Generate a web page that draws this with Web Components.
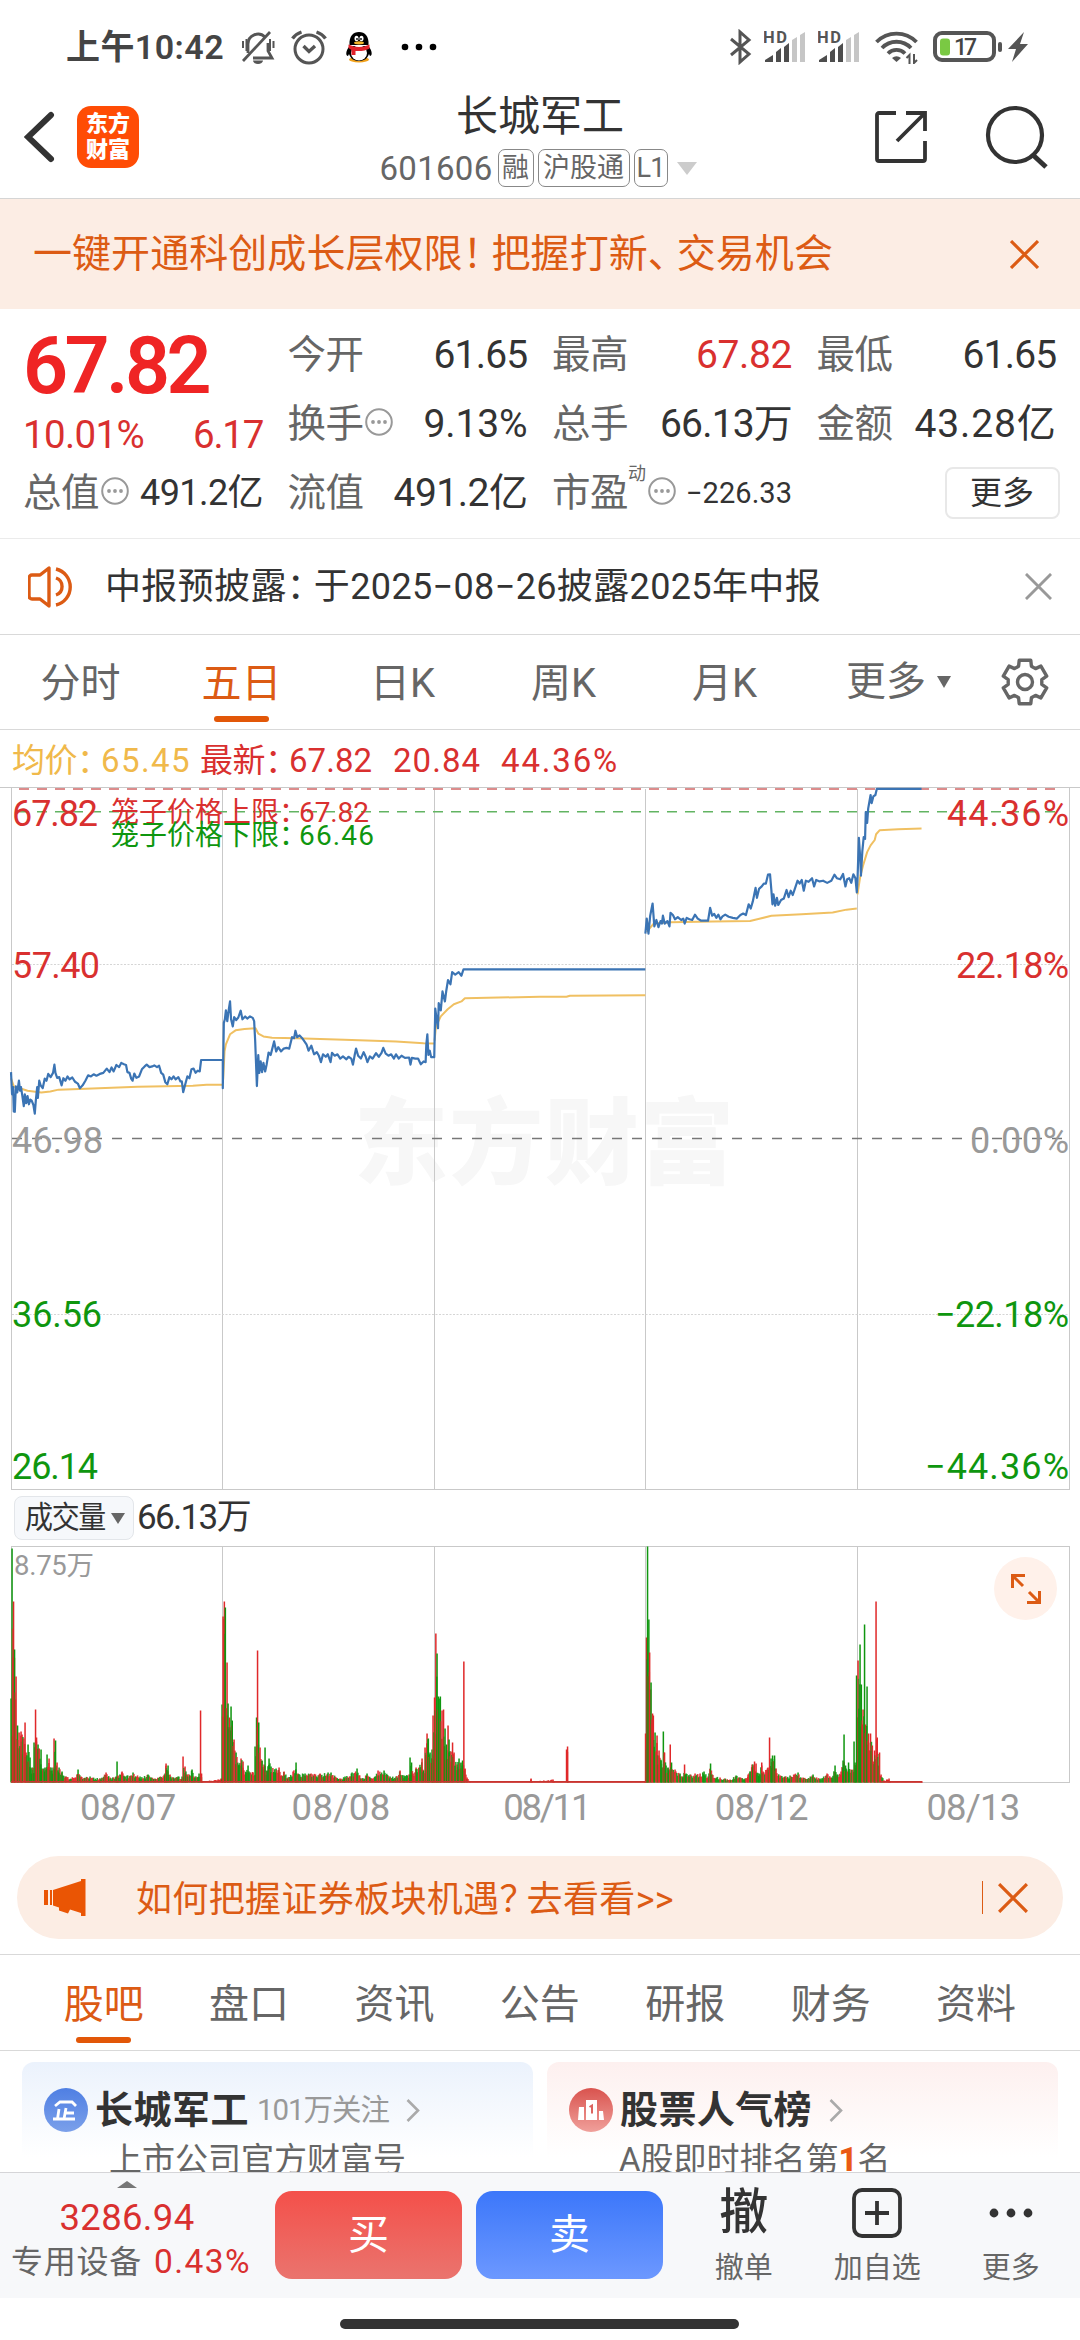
<!DOCTYPE html>
<html lang="zh-CN">
<head>
<meta charset="utf-8">
<title>长城军工 601606</title>
<style>
	body {
		margin: 0;
		width: 1080px;
		height: 2340px;
		overflow: hidden;
		background: #fff;
		color: #333;
		font-family: Roboto, "Noto Sans CJK SC", sans-serif;
	}
</style>
</head>
<body>
<stock-page></stock-page>
<script>
const sheet = `
	* { box-sizing: border-box; }
	svg { display: block; flex: none; }
`;

// Small base: every element only gives back its markup.
class Part extends HTMLElement {
	connectedCallback() {
		if (this.shadowRoot) return;
		this.attachShadow({ mode: "open" });
		this.shadowRoot.innerHTML = `<style>${sheet}</style>` + this.render();
	}
	get(name, fallback = "") {
		return this.getAttribute(name) ?? fallback;
	}
}

const cross = (size, color, width = 3) => `
	<svg width="${size}" height="${size}" viewBox="0 0 28 28" fill="none" stroke="${color}" stroke-width="${width}">
		<path d="M1 1 27 27M27 1 1 27"/>
	</svg>`;

// One run of text, tracked so that it fills the width in "w".
class FitText extends Part {
	render() {
		const text = this.get("text").replace(/[：！、？]/g, (c) => `<i>${c}</i>`);
		return `
			<style>
				:host { display: block; flex: none; white-space: nowrap; }
				span { letter-spacing: var(--ls, 0px); }
				i { font-style: normal; letter-spacing: calc(var(--ls, 0px) - 0.26em); }
			</style>
			<span>${text}</span>`;
	}
	connectedCallback() {
		super.connectedCallback();
		const w = Number(this.get("w", 0));
		if (!w) return;
		const span = this.shadowRoot.querySelector("span");
		const gap = (w - span.getBoundingClientRect().width) / this.get("text").length;
		span.style.setProperty("--ls", gap.toFixed(3) + "px");
	}
}

class StatusBar extends Part {
	render() {
		const signal = `
			<svg width="42" height="34" viewBox="0 0 42 34">
				<text x="-1" y="12.500" font-size="16.500" font-weight="700" fill="#555" textLength="24" font-family="Roboto, sans-serif">HD</text>
				<path fill="#4d4d4d" d="M1 32v-2l8-5v7zM12 32V22l5-4v14zM20 32V17l5-4v19z"/>
				<path fill="#c6c6c6" d="M28 32V10l5-3v25zM36 32V5l5-3v30z"/>
			</svg>`;
		return `
			<style>
				:host { display: flex; align-items: center; height: 92px; padding: 2px 52px 0 66px; }
				.time { font-size: 34px; font-weight: 600; color: #444; line-height: 40px; }
				.left, .right { display: flex; align-items: center; }
				.right { margin-left: auto; }
			</style>
			<div class="left">
				<fit-text class="time" text="上午10:42" w="158"></fit-text>
				<svg style="margin-left:16px" width="36" height="34" viewBox="0 0 36 34" fill="none" stroke="#555" stroke-width="2.800">
					<path d="M8 21v-7a10 10 0 0 1 17-7M28 13v8l4 7H13M8 21v2"/>
					<path d="M3 31 30 2"/>
					<path d="M6.500 9v12M3 11v7M30 9v12M33.500 11v7" stroke-width="2"/>
					<path d="M13 30.500h10a5 3.400 0 0 1-10 0z" fill="#555" stroke="none"/>
				</svg>
				<svg style="margin-left:15px" width="36" height="36" viewBox="0 0 36 36" fill="none" stroke="#555" stroke-width="3">
					<circle cx="18" cy="20" r="14"/>
					<path d="m12.500 17 5.500 5.500 6-5.500M1.500 9.500a18 18 0 0 1 9-6.500M34.500 9.500a18 18 0 0 0-9-6.500" stroke-width="3.400"/>
				</svg>
				<svg style="margin-left:18px" width="28" height="32" viewBox="0 0 28 32">
					<ellipse cx="14" cy="28.500" rx="10" ry="3" fill="#f2a21c"/>
					<path d="M4.500 15C0 21 1 25 3 25l1-2c2 5 5 7 10 7s8-2 10-7l1 2c2 0 3-4-1.500-10z" fill="#000"/>
					<ellipse cx="14" cy="22" rx="8" ry="7.500" fill="#fff"/>
					<path d="M4.500 14C4 5 8 1 14 1s10 4 9.500 13z" fill="#000"/>
					<ellipse cx="11.500" cy="7.500" rx="2" ry="2.800" fill="#fff"/><ellipse cx="16.500" cy="7.500" rx="2" ry="2.800" fill="#fff"/>
					<circle cx="12" cy="8" r=".9"/><circle cx="16" cy="8" r=".9"/>
					<ellipse cx="14" cy="11.800" rx="5" ry="1.600" fill="#f5b52a"/>
					<path d="M3.500 13.500q10.500 5 21 0v4q-5 3-14 2.500v4h-4V19l-3-2z" fill="#e0222a"/>
				</svg>
				<svg style="margin-left:28px" width="36" height="8" viewBox="0 0 36 8"><circle cx="4" cy="4" r="3.300"/><circle cx="18" cy="4" r="3.300"/><circle cx="32" cy="4" r="3.300"/></svg>
			</div>
			<div class="right">
				<svg width="22" height="36" viewBox="0 0 22 36" fill="none" stroke="#555" stroke-width="3"><path d="m1 10 18 15-9 8V3l9 8L1 26"/></svg>
				<div style="width:12px"></div>${signal}
				<div style="width:12px"></div>${signal}
				<svg style="margin-left:15px" width="44" height="34" viewBox="0 0 44 34" fill="none" stroke="#555" stroke-width="3.800">
					<path d="M1.500 12a28 28 0 0 1 40 0M7 18a20 20 0 0 1 29 0M13 23.500a12 12 0 0 1 17 0"/>
					<path d="m17 28 4.500 4 4.500-4a7 7 0 0 0-9 0z" fill="#555" stroke="none"/>
					<path d="M34.500 34V25l-3 3M39 24v9l3-3" stroke-width="2"/>
				</svg>
				<svg style="margin-left:14px" width="70" height="32" viewBox="0 0 70 32">
					<rect x="2" y="2" width="59" height="27" rx="7" fill="none" stroke="#555" stroke-width="4"/>
					<rect x="7" y="7.500" width="10" height="17" rx="3" fill="#7ac943"/>
					<text x="21" y="24" font-size="23" font-weight="500" fill="#444" textLength="23" font-family="Roboto, sans-serif">17</text>
					<rect x="65" y="11" width="4" height="10" rx="2" fill="#555"/>
				</svg>
				<svg style="margin-left:5px" width="20" height="30" viewBox="0 0 20 30"><path d="M16 0 0 17h8L4 30 20 12h-8z" fill="#555"/></svg>
			</div>`;
	}
}

class StockHeader extends Part {
	render() {
		return `
			<style>
				:host { display: grid; grid-template-columns: 340px 400px 340px; height: 107px; border-bottom: 1px solid #d5d5d5; }
				.side { display: flex; align-items: center; height: 90px; }
				.left { padding-left: 24px; }
				.right { justify-content: flex-end; padding-right: 31px; gap: 57px; }
				.logo {
					display: grid; place-content: center; justify-items: center;
					width: 62px; height: 62px; margin-left: 22px; border-radius: 14px;
					background: #ff4c05; color: #fff; font-size: 22px; font-weight: 900; line-height: 26px;
				}
				.mid { display: flex; flex-direction: column; align-items: center; }
				.title { font-size: 42px; line-height: 50px; }
				.sub { display: flex; align-items: center; margin: 7px 4px 0 0; height: 38px; font-size: 33px; color: #666; }
				.tag { display: grid; place-items: center; height: 38px; border: 1.500px solid #888; border-radius: 7px; font-size: 27px; line-height: 36px; }
				.sub svg { margin: 0 0 0 9px; }
			</style>
			<div class="side left">
				<svg width="31" height="52" viewBox="0 0 31 52" fill="none" stroke="#333" stroke-width="6" stroke-linecap="round"><path d="M27 4 4 26l23 22"/></svg>
				<div class="logo"><span>东方</span><span>财富</span></div>
			</div>
			<div class="mid">
				<fit-text class="title" text="长城军工" w="168"></fit-text>
				<div class="sub">
					<fit-text text="601606" w="113"></fit-text>
					<div class="tag" style="width:36px;margin-left:5px">融</div>
					<div class="tag" style="width:92px;margin-left:4px">沪股通</div>
					<div class="tag" style="width:34px;margin-left:4px"><fit-text text="L1" w="28"></fit-text></div>
					<svg width="20" height="13" viewBox="0 0 20 13"><path d="M0 0h20L10 13z" fill="#ccc"/></svg>
				</div>
			</div>
			<div class="side right">
				<svg width="54" height="54" viewBox="0 0 54 54" fill="none" stroke="#333" stroke-width="3.800">
					<path d="M22 3H5a2 2 0 0 0-2 2v44a2 2 0 0 0 2 2h44a2 2 0 0 0 2-2V31M32 3h19v18M51 3 23 31"/>
				</svg>
				<svg width="64" height="64" viewBox="0 0 64 64" fill="none" stroke="#333" stroke-width="4.200"><circle cx="30" cy="30" r="27"/><path d="m48 50 13 12" stroke-width="5"/></svg>
			</div>`;
	}
}

class TopBanner extends Part {
	render() {
		return `
			<style>
				:host { display: flex; align-items: center; justify-content: space-between; height: 110px; padding: 0 41px 0 33px; background: #fcede4; color: #dc5b14; font-size: 39px; line-height: 50px; }
			</style>
			<fit-text text="${this.get("text")}" w="800"></fit-text>
			${cross(29, "#dc5b14", 3)}`;
	}
}

const infoDot = `
	<svg class="dot" width="28" height="28" viewBox="0 0 28 28">
		<circle cx="14" cy="14" r="12.800" fill="none" stroke="#999" stroke-width="2"/>
		<circle cx="8" cy="14" r="1.900" fill="#999"/><circle cx="14" cy="14" r="1.900" fill="#999"/><circle cx="20" cy="14" r="1.900" fill="#999"/>
	</svg>`;

class QuoteCell extends Part {
	render() {
		const note = this.get("note");
		return `
			<style>
				:host { display: flex; align-items: center; height: 69px; line-height: 50px; }
				.label { font-size: 38.500px; color: #666; }
				.value { margin-left: auto; font-size: ${this.get("size", "39")}px; color: ${this.get("color", "#333")}; }
				.note { align-self: flex-start; margin: 6px 0 0 0; font-size: 18px; line-height: 20px; color: #666; }
				.dot { margin: -4px 0 0 2px; }
			</style>
			<fit-text class="label" text="${this.get("label")}" w="76"></fit-text>
			${note ? `<span class="note">${note}</span>` : ""}
			${this.hasAttribute("info") ? infoDot : ""}
			<fit-text class="value" text="${this.get("value")}" w="${this.get("w")}"></fit-text>`;
	}
}

class QuotePanel extends Part {
	render() {
		return `
			<style>
				:host { display: grid; grid-template-columns: repeat(4, 240px); grid-template-rows: repeat(3, 69px); column-gap: 24.500px; height: 230px; padding: 11px 0 0 23px; border-bottom: 1px solid #ebebeb; }
				.main { grid-row: span 2; padding-top: 16px; }
				.price { font-size: 79px; font-weight: 600; line-height: 60px; color: #ef2424; }
				.change { display: flex; justify-content: space-between; margin-top: 19px; font-size: 38.500px; line-height: 40px; color: #d9302f; }
				.more { display: grid; place-items: center; justify-self: end; align-self: center; width: 115px; height: 52px; border: 2px solid #e8e8e8; border-radius: 8px; font-size: 32px; line-height: 48px; margin-right: -3px; }
			</style>
			<div class="main">
				<fit-text class="price" text="67.82" w="185"></fit-text>
				<div class="change"><fit-text text="10.01%" w="121"></fit-text><fit-text text="6.17" w="70"></fit-text></div>
			</div>
			<quote-cell label="今开" value="61.65" w="94"></quote-cell>
			<quote-cell label="最高" value="67.82" w="96" color="#d9302f"></quote-cell>
			<quote-cell label="最低" value="61.65" w="94"></quote-cell>
			<quote-cell label="换手" value="9.13%" w="104" info></quote-cell>
			<quote-cell label="总手" value="66.13万" w="132"></quote-cell>
			<quote-cell label="金额" value="43.28亿" w="142"></quote-cell>
			<quote-cell label="总值" value="491.2亿" w="123" size="36" info></quote-cell>
			<quote-cell label="流值" value="491.2亿" w="134"></quote-cell>
			<quote-cell label="市盈" note="动" value="−226.33" w="106" size="29" info></quote-cell>
			<div class="more">更多</div>`;
	}
}

class NoticeRow extends Part {
	render() {
		return `
			<style>
				:host { display: flex; align-items: center; height: 96px; padding: 0 28px; border-bottom: 1px solid #d9d9d9; font-size: 36px; line-height: 50px; }
				fit-text { margin: 0 auto 0 29px; }
			</style>
			<svg width="48" height="42" viewBox="0 0 48 42" fill="none" stroke="#dc5b14" stroke-width="3.400" stroke-linejoin="round">
				<path d="M21 2v38l-9-7H4a3 3 0 0 1-3-3V12a3 3 0 0 1 3-3h8zM28 3a18.500 18.500 0 0 1 0 36M28 12a9 9 0 0 1 0 17"/>
			</svg>
			<fit-text text="${this.get("text")}" w="716"></fit-text>
			${cross(27, "#999", 3)}`;
	}
}

// Labels come in as "tabs", comma separated; the "on" index gets the underline.
class TabStrip extends Part {
	render() {
		const tabs = this.get("tabs").split(",");
		const on = Number(this.get("on", 0));
		return `
			<style>
				:host { display: flex; height: 95px; border-bottom: 1px solid #d9d9d9; font-size: 40px; line-height: 50px; color: #666; }
				.tab { display: flex; flex: none; flex-direction: column; align-items: center; width: ${this.get("pitch")}px; padding-top: 24px; }
				.on { color: #dc5b14; }
				.on::after { content: ""; width: 55px; height: 6px; margin-top: 7px; border-radius: 3px; background: #e25708; }
			</style>
			${tabs.map((t, i) => `<div class="tab ${i === on ? "on" : ""}"><span>${t}</span></div>`).join("")}
			<slot></slot>`;
	}
}

class GearIcon extends Part {
	render() {
		const pts = [];
		for (let i = 0; i < 6; i++) {
			for (const [d, r] of [[-22, 17], [-15, 22.500], [15, 22.500], [22, 17]]) {
				const a = ((i * 60 - 90 + d) * Math.PI) / 180;
				pts.push((24 + r * Math.cos(a)).toFixed(1) + "," + (24 + r * Math.sin(a)).toFixed(1));
			}
		}
		return `
			<style>:host { display: block; }</style>
			<svg width="48" height="48" viewBox="0 0 48 48" fill="none" stroke="#666" stroke-width="3.400" stroke-linejoin="round">
				<polygon points="${pts.join(" ")}"/><circle cx="24" cy="24" r="7.500"/>
			</svg>`;
	}
}

class AverageRow extends Part {
	render() {
		return `
			<style>
				:host { display: flex; height: 57px; padding: 5px 12px 0; font-size: 33px; line-height: 52px; color: #d9302f; }
				.avg { color: #f0b94b; }
			</style>
			<fit-text class="avg" text="均价：" w="89"></fit-text><fit-text class="avg" text="65.45" w="90"></fit-text>
			<fit-text style="margin-left:9px" text="最新：" w="89"></fit-text><fit-text text="67.82" w="83"></fit-text>
			<fit-text style="margin-left:21px" text="20.84" w="88"></fit-text>
			<fit-text style="margin-left:20px" text="44.36%" w="118"></fit-text>`;
	}
}

// Chart lines: flat "x,y" lists, two halves of the plot with their own origin.
const PRICE_LEFT = "32,1238 35,1300 38,1280 40,1348 43,1349 46,1278 50,1295 55,1262 58,1290 61,1280 65,1305 69,1333 72,1300 76,1325 80,1305 84,1328 88,1315 92,1318 97,1330 101,1354 104,1318 108,1280 110,1310 114,1262 118,1275 124,1283 130,1256 135,1262 140,1243 147,1252 154,1240 158,1217 161,1240 166,1254 172,1252 179,1275 184,1255 190,1262 196,1250 202,1258 210,1253 218,1265 226,1270 232,1283 240,1275 248,1262 256,1247 264,1250 272,1244 280,1248 290,1243 300,1240 310,1228 318,1238 324,1225 330,1236 338,1218 346,1224 352,1212 360,1216 366,1218 370,1238 376,1240 381,1256 385,1262 390,1242 396,1254 404,1250 412,1230 420,1222 426,1217 434,1224 442,1222 448,1219 456,1224 462,1220 468,1240 474,1245 480,1266 486,1272 492,1252 498,1258 504,1250 510,1258 518,1252 524,1264 528,1264 532,1294 538,1272 544,1250 550,1255 556,1230 562,1228 568,1240 574,1234 580,1236 584,1204 647,1204 647,1283 650,1100 653,1090 656,1065 660,1095 664,1065 668,1040 671,1090 676,1110 680,1084 686,1092 692,1085 699,1066 704,1090 712,1082 718,1088 726,1082 734,1086 738,1095 741,1150 746,1277 750,1190 753,1240 757,1208 761,1238 765,1212 770,1236 774,1218 780,1183 786,1190 790,1175 796,1152 802,1180 808,1168 816,1180 824,1172 832,1170 840,1172 848,1140 854,1143 858,1122 863,1140 870,1135 880,1146 890,1160 896,1178 904,1164 912,1188 920,1182 926,1192 932,1210 938,1188 946,1195 952,1188 960,1210 964,1184 972,1192 980,1188 988,1200 996,1194 1006,1202 1012,1195 1020,1200 1025,1217 1030,1190 1034,1172 1040,1192 1048,1200 1056,1182 1062,1195 1067,1210 1074,1194 1082,1200 1092,1185 1100,1195 1108,1184 1113,1170 1120,1186 1128,1192 1136,1188 1144,1200 1150,1188 1158,1200 1166,1192 1176,1198 1188,1197 1192,1217 1196,1198 1206,1200 1214,1200 1222,1216 1230,1208 1236,1210 1238,1160 1241,1132 1244,1190 1248,1178 1252,1196 1261,1196 1264,1060 1268,1090 1272,1115 1274,1045 1280,1065 1285,1012 1292,1040 1296,1010 1301,980 1308,992 1313,958 1322,965 1332,958 1340,968 1346,950 1874,950";
const PRICE_RIGHT = "306,850 310,808 315,850 320,800 327,766 332,830 338,812 344,832 350,815 354,822 357,800 362,822 370,815 376,830 379,792 386,798 392,810 400,804 410,812 416,808 420,822 426,806 434,810 442,812 450,797 458,808 468,814 478,814 488,814 494,778 500,800 506,795 512,806 518,797 524,810 530,802 538,797 548,803 560,806 572,808 582,798 590,794 598,798 606,768 612,780 618,760 626,722 630,750 636,725 644,718 650,710 656,710 662,685 668,684 672,730 675,768 678,740 683,772 688,750 692,770 700,756 708,752 716,728 722,748 728,730 734,742 740,725 748,702 754,710 760,700 766,730 772,702 780,705 790,695 796,718 802,700 812,704 822,702 834,708 846,702 855,685 862,695 872,698 880,683 887,718 892,698 898,695 904,708 910,684 916,695 920,735 922,700 926,582 930,640 932,688 936,620 940,580 944,585 946,510 950,540 953,500 960,462 963,485 968,466 974,462 978,445 1108,445";
const AVG_LEFT = [
	"32,1255 40,1278 60,1284 80,1290 120,1295 146,1292 170,1287 230,1285 400,1279 560,1276 600,1273 647,1273",
	"648,1260 652,1180 656,1160 668,1132 684,1121 710,1117 742,1115 750,1130 765,1138 790,1142 860,1143 1000,1147 1150,1152 1230,1157 1261,1158",
	"1262,1150 1266,1110 1280,1082 1300,1062 1318,1048 1340,1040 1350,1031 1568,1027 1645,1027 1655,1024 1874,1023",
];
const AVG_RIGHT = [
	"310,845 330,822 380,818 500,816 610,815 640,808 672,800 760,796 850,791 890,783 920,780",
	"922,740 930,690 938,660 950,622 960,603 972,588 976,572 986,561 1040,558 1108,556",
];
const DAY_X = [222.500, 434.500, 645.500, 857.500];

class PriceChart extends Part {
	render() {
		const line = (pts, color, w) => `<polyline points="${pts}" fill="none" stroke="${color}" stroke-width="${w}" stroke-linejoin="round" vector-effect="non-scaling-stroke"/>`;
		const group = (x, blue, avg) => `<g transform="translate(${x} -157) scale(.34436 .35714)">${avg.map((a) => line(a, "#f0c062", 2)).join("")}${line(blue, "#3b74b4", 2.200)}</g>`;
		const labels = [
			["67.82", "44.36%", 39, 86, 122, "#d9302f"],
			["57.40", "22.18%", 190.500, 88, 113, "#d9302f"],
			["46.98", "0.00%", 366, 91, 99, "#999"],
			["36.56", "−22.18%", 540, 90, 134, "#0f960f"],
			["26.14", "−44.36%", 692, 86, 144, "#0f960f"],
		];
		return `
			<style>
				:host { display: block; height: 703px; }
				text { font-family: Roboto, "Noto Sans CJK SC", sans-serif; }
			</style>
			<svg width="1080" height="703" viewBox="0 0 1080 703">
				<text x="354" y="390" font-size="94" font-weight="900" fill="#f7f7f7" textLength="380">东方财富</text>
				<g stroke="#c9c9c9">
					<path d="M0 .5h1080M11.500 0v702M1069.500 0v702M11 702.500h1059"/>
					${DAY_X.map((x) => `<path d="M${x} 2v700"/>`).join("")}
					<path d="M12 177.500h1057M12 527.500h1057" stroke="#d5d5d5" stroke-dasharray="2 1.500"/>
				</g>
				<path d="M12 351.500h1057" stroke="#777" stroke-width="1.600" stroke-dasharray="10 10"/>
				<path d="M19 2h1037" stroke="#dc8c8c" stroke-width="2" stroke-dasharray="10 8"/>
				<path d="M19 24.800h1037" stroke="#62b462" stroke-width="1.600" stroke-dasharray="10 8"/>
				${group(0, PRICE_LEFT, AVG_LEFT)}
				${group(540, PRICE_RIGHT, AVG_RIGHT)}
				<g font-size="36">
					${labels.map(([l, r, y, lw, rw, c]) => `
						<text x="12" y="${y}" fill="${c}" textLength="${lw}">${l}</text>
						<text x="${1069 - rw}" y="${y}" fill="${c}" textLength="${rw}">${r}</text>`).join("")}
				</g>
				<g font-size="28" fill="#d9302f"><text x="111" y="35" textLength="168">笼子价格上限</text><text x="279" y="35">：</text><text x="299" y="35" textLength="70">67.82</text></g>
				<g font-size="28" fill="#0f960f"><text x="111" y="58" textLength="168">笼子价格下限</text><text x="279" y="58">：</text><text x="299" y="58" textLength="75">66.46</text></g>
			</svg>`;
	}
}

class VolumeHead extends Part {
	render() {
		return `
			<style>
				:host { display: flex; align-items: center; height: 56px; padding: 0 14px; font-size: 35px; line-height: 44px; }
				.pick { display: flex; align-items: center; justify-content: space-between; width: 120px; height: 44px; padding: 0 8px 0 10px; border: 1px solid #e3e6ea; border-radius: 8px; background: #f6f8fb; font-size: 28px; }
				.pick b { font-weight: 400; transform: scaleY(1.080); }
			</style>
			<div class="pick"><b><fit-text text="成交量" w="80"></fit-text></b><svg width="14" height="11" viewBox="0 0 14 11"><path d="M0 0h14L7 11z" fill="#666"/></svg></div>
			<fit-text style="margin-left:3px" text="66.13万" w="113"></fit-text>`;
	}
}

// Peaks as [x, height, colour]; the minutes in between follow the same outline.
const PEAKS = [
	[11, 84, "g"], [12, 234, "g"], [13.500, 181, "r"], [14.500, 133, "g"], [16, 106, "r"], [17.500, 57, "g"], [19, 50], [21, 51, "r"], [22, 48, "r"], [25, 60, "r"], [26, 30], [28, 38, "g"], [30, 25], [32, 15], [34, 40], [35.500, 73, "r"], [36.500, 45], [38, 38, "g"], [39, 34, "r"], [41, 33], [42, 14], [45, 15], [47, 28, "g"], [49, 24, "r"], [51, 15], [53, 15], [54, 44, "r"], [55.500, 42, "g"], [57, 20, "r"], [59, 15], [62, 11], [66, 6], [75, 5], [78, 13, "g"], [81, 6], [90, 6], [100, 4], [106, 10, "r"], [110, 5], [116, 6], [117, 21, "g"], [118, 7], [122, 11, "r"], [125, 6], [133, 10, "g"], [140, 6], [148, 8], [155, 4], [165, 9], [166, 19, "r"], [168, 17, "g"], [170, 8], [178, 6], [182, 6], [183, 26, "r"], [185, 16], [187, 8], [192, 13, "g"], [194, 6], [199, 9], [200.500, 72, "r"], [201.500, 9, "r"], [202.500, 1, "r"], [218, 3, "r"], [221, 4, "r"],
	[222, 78, "g"], [223, 166, "r"], [224.300, 181, "r"], [225.300, 175, "g"], [227, 120, "r"], [228, 79, "g"], [229.500, 65, "r"], [231, 76, "g"], [232.200, 62, "g"], [234, 43, "r"], [236, 30, "g"], [239, 18], [241, 24, "r"], [243, 21, "r"], [246, 10], [248, 17, "g"], [253, 10], [255, 36, "g"], [256.500, 65, "g"], [257.500, 132, "r"], [258.700, 60, "g"], [260, 35, "r"], [262, 22], [264, 18], [265, 35, "g"], [267, 12], [269, 24, "g"], [271, 16], [276, 14], [279, 15, "r"], [281, 7], [284, 11], [288, 5], [293, 11, "r"], [296, 20, "g"], [298, 9], [305, 9], [311, 9], [320, 9], [328, 10], [331, 10], [340, 4], [345, 6], [352, 10], [357, 14, "g"], [362, 4], [367, 9], [372, 4], [378, 12, "r"], [384, 12, "g"], [390, 6], [396, 6], [400, 12, "r"], [404, 7], [409, 8], [410, 25, "g"], [411.500, 20], [413, 9], [416, 15], [419, 15, "r"], [422, 24, "r"], [423.500, 12], [425, 35, "r"], [427, 49, "r"], [428.300, 44, "g"], [430, 30], [432, 33], [433, 67, "r"],
	[434.500, 85, "r"], [435.800, 149, "r"], [437, 129, "g"], [438.300, 86, "g"], [440.300, 86, "g"], [442, 72, "r"], [443.500, 73, "r"], [445, 54, "g"], [446.500, 38], [448, 57, "r"], [449, 43, "g"], [451, 31], [452.500, 40, "r"], [454, 30], [457, 18], [459, 24, "g"], [461, 20], [462.500, 22], [463.800, 121, "r"], [465, 14, "r"], [467, 5, "r"], [470, 1, "r"], [530, 1, "r"], [531, 4, "r"], [532, 1, "r"], [553, 3, "r"], [554, 1, "r"], [566.500, 33, "r"], [567.500, 36, "r"], [568.200, 1, "r"], [645, 1, "r"],
	[645.500, 49, "r"], [646.500, 145, "r"], [647.500, 236, "g"], [648.800, 163, "g"], [649.600, 130, "r"], [651, 100, "g"], [652.500, 69, "r"], [653.300, 67, "r"], [655, 50, "g"], [657, 47, "r"], [659, 32, "r"], [661, 22], [663.300, 51, "g"], [664.500, 30, "r"], [666, 17], [668, 15], [670.200, 38, "r"], [671.500, 20, "g"], [675, 13], [680, 9], [683, 6], [684.500, 18, "r"], [686, 9], [690, 8], [695, 9], [700, 9], [704, 11, "g"], [708, 6], [710.500, 19, "g"], [712, 8], [720, 5], [730, 3], [736, 7], [745, 4], [748, 8], [752, 18, "r"], [754.500, 21, "r"], [756, 19], [759, 9], [761.700, 20, "r"], [763, 11], [768, 15], [769.500, 45, "r"], [771, 24], [772.500, 27, "g"], [774.500, 27, "g"], [776, 14], [780, 7], [785, 6], [790, 7], [798, 10], [803, 5], [813, 8], [820, 4], [827, 9, "r"], [832, 5], [835, 17, "g"], [837, 8], [841, 11], [843, 22], [844, 48, "g"], [845.500, 17], [848.500, 20, "g"], [851, 13], [854, 41, "g"], [855, 20],
	[856.500, 107, "g"], [858, 122, "r"], [860, 138, "g"], [861.300, 98, "g"], [863, 73, "r"], [864.500, 158, "g"], [865.600, 58, "r"], [867, 96, "g"], [868.500, 49, "r"], [870.500, 49, "r"], [872.300, 37, "r"], [874.500, 32, "r"], [876, 181, "r"], [877.200, 45, "r"], [879.500, 30, "r"], [881, 8, "r"], [884, 2, "r"], [889, 4, "r"], [890, 1, "r"], [922, 1, "r"],
];

class VolumeChart extends Part {
	bars() {
		const fill = { r: "#e0282a", g: "#0f960f" };
		let seed = 11;
		const rnd = () => (seed = (seed * 16807) % 2147483647) / 2147483647;
		let out = "";
		const bar = (x, h, c, o = 1) => {
			out += `<rect x="${(x - 0.7).toFixed(1)}" y="${(236.500 - h).toFixed(1)}" width="1.500" height="${h.toFixed(1)}" fill="${fill[c]}" opacity="${o}"/>`;
		};
		PEAKS.forEach(([x, h, c], i) => {
			const flat = h <= 5 && c === "r";
			bar(x, h, c || (rnd() < 0.5 ? "r" : "g"));
			const next = PEAKS[i + 1];
			if (!next) return;
			const top = Math.min(h, next[1]);
			for (let m = x + 0.9; m < next[0]; m += 0.9) {
				const share = (m - x) / (next[0] - x);
				const base = Math.abs(h - next[1]) > 14 ? top : h + (next[1] - h) * share;
				bar(m, Math.max(1, base * (0.55 + rnd() * 0.45)), flat || rnd() < 0.5 ? "r" : "g", flat ? 1 : 0.9);
			}
			if (h > 14 && i % 2) bar(x + 0.5, top * 0.85, c === "g" ? "r" : "g", 0.55);
		});
		return out;
	}
	render() {
		return `
			<style>
				:host { display: block; position: relative; height: 237px; }
				.zoom { position: absolute; right: 23px; top: 11px; display: grid; place-items: center; width: 63px; height: 63px; border-radius: 50%; background: #fff1ea; }
			</style>
			<svg width="1080" height="237" viewBox="0 0 1080 237">
				<g stroke="#c9c9c9" fill="none">
					<rect x="11.500" y=".5" width="1058" height="236"/>
					${DAY_X.map((x) => `<path d="M${x} 0v236"/>`).join("")}
				</g>
				${this.bars()}
				<path d="M11 235.700h454M460 235.700h186" stroke="#c8352f" stroke-width="1.600"/>
				<path d="M880 235.700h42" stroke="#c8352f" stroke-width="1.600"/>
				<text x="14" y="29" font-size="27.500" fill="#999" textLength="80" font-family='Roboto, "Noto Sans CJK SC", sans-serif'>8.75万</text>
			</svg>
			<div class="zoom">
				<svg width="32" height="32" viewBox="0 0 32 32" fill="none" stroke="#dc5b14" stroke-width="3"><path d="M2.500 15V2.500H15M2.500 2.500 13 13M29.500 18v11.500H17M29.500 29.500 19 19"/></svg>
			</div>`;
	}
}

class DateAxis extends Part {
	render() {
		const days = [["08/07", 96], ["08/08", 99], ["08/11", 86], ["08/12", 93], ["08/13", 93]];
		return `
			<style>
				:host { display: grid; grid-template-columns: repeat(5, 211.600px); height: 73px; padding: 3px 0 0 80px; font-size: 36.500px; line-height: 44px; color: #999; }
			</style>
			${days.map(([d, w]) => `<fit-text text="${d}" w="${w}"></fit-text>`).join("")}`;
	}
}

class PromoPill extends Part {
	render() {
		return `
			<style>
				:host { display: flex; align-items: center; flex: none; height: 83px; margin: 0 17px 15px; padding: 0 35px 0 27px; border-radius: 42px; background: #fcede4; color: #dc5b14; font-size: 36px; line-height: 50px; }
				fit-text { margin: 4px auto 0 50px; }
				.rule { width: 1.500px; height: 33px; margin-right: 15px; background: #dc5b14; }
			</style>
			<svg width="42" height="37" viewBox="0 0 42 37" fill="#ea5504"><path d="M0 11h4v15H0zM6 11h2v15H6zM9 11 37 2V0h4.500v37H37v-3l-11-3.500-2 4-9-3v-3l-6-2z"/></svg>
			<fit-text text="如何把握证券板块机遇？去看看>>" w="538"></fit-text>
			<div class="rule"></div>
			${cross(30, "#dc5b14", 3)}`;
	}
}

class FeedCard extends Part {
	render() {
		return `
			<style>
				:host { display: block; width: 511px; height: 150px; padding: 24px 22px; border-radius: 12px 12px 0 0; background: linear-gradient(var(--tint), #fff 95px); }
				.top { display: flex; align-items: center; height: 48px; }
				.name { margin-left: 7px; font-size: 38px; font-weight: 600; line-height: 50px; }
				.extra { margin-left: 8px; font-size: 29.500px; line-height: 40px; color: #999; }
				.top > svg:last-child { margin-left: 17px; }
				.sub { margin: 6px 0 0 var(--indent, 50px); font-size: 33px; line-height: 40px; color: #666; }
			</style>
			<div class="top">
				<slot name="icon"></slot>
				<fit-text class="name" text="${this.get("name")}" w="${this.get("w")}"></fit-text>
				${this.hasAttribute("extra") ? `<fit-text class="extra" text="${this.get("extra")}" w="132"></fit-text>` : ""}
				<svg width="14" height="23" viewBox="0 0 14 23" fill="none" stroke="#aaa" stroke-width="2.600"><path d="m1.500 1 10.500 10.500L1.500 22"/></svg>
			</div>
			<div class="sub"><slot></slot></div>`;
	}
}

class FeedCards extends Part {
	render() {
		return `
			<style>
				:host { display: flex; gap: 14px; height: 121px; padding: 11px 22px 0; overflow: hidden; }
				em { font-style: normal; font-weight: 800; color: #ea5a14; }
			</style>
			<feed-card style="--tint:#ebf2fc;--indent:65px" name="长城军工" w="154" extra="101万关注">
				<svg slot="icon" width="44" height="44" viewBox="0 0 44 44">
					<defs><linearGradient id="b" x2="0" y2="1"><stop stop-color="#4f7fe3"/><stop offset="1" stop-color="#7ba0ea"/></linearGradient></defs>
					<circle cx="22" cy="22" r="22" fill="url(#b)"/>
					<path d="m11 18 5-4h12l4 4M22 20l-2 11M22 25h8M15 21l-1.500 10M9 31h22" fill="none" stroke="#fff" stroke-width="2.800"/>
				</svg>
				上市公司官方财富号
			</feed-card>
			<feed-card style="--tint:#fdf0ef" name="股票人气榜" w="192">
				<svg slot="icon" width="44" height="44" viewBox="0 0 44 44">
					<defs><linearGradient id="r" x2="0" y2="1"><stop stop-color="#d9534e"/><stop offset="1" stop-color="#f0a09b"/></linearGradient></defs>
					<circle cx="22" cy="22" r="22" fill="url(#r)"/>
					<path d="M10 19h5v13H9zM17 12h11v20H17zM30 23h4l1 9h-5z" fill="#fff"/>
					<path d="m20.500 19 2.500-1.500v8" fill="none" stroke="#dc6560" stroke-width="2"/>
				</svg>
				A股即时排名第<em>1</em>名
			</feed-card>`;
	}
}

class TradeAction extends Part {
	render() {
		return `
			<style>
				:host { display: flex; flex-direction: column; align-items: center; width: 133.500px; padding-top: 13px; font-size: 29px; line-height: 40px; color: #666; }
				.pic { display: grid; place-items: center; height: 54px; margin-bottom: 8px; color: #333; }
			</style>
			<div class="pic"><slot></slot></div>
			<span>${this.get("label")}</span>`;
	}
}

class TradeBar extends Part {
	render() {
		return `
			<style>
				:host { display: flex; height: 126px; border-top: 1px solid #d5d5d8; background: #f7f8fa; }
				.index { display: flex; flex-direction: column; align-items: center; width: 254px; padding-top: 8px; margin-right: 21px; color: #d9302f; }
				.value { margin-top: 8px; font-size: 36.500px; line-height: 44px; margin-right: 0; }
				.row { display: flex; align-self: flex-start; margin-left: 11px; gap: 12px; font-size: 33.500px; line-height: 44px; }
				.row :first-child { color: #666; font-size: 32px; }
				.btn { display: grid; place-items: center; width: 187px; height: 88px; margin: 18px 14px 0 0; border-radius: 17px; color: #fff; font-size: 41px; line-height: 50px; }
				.buy { background: linear-gradient(#f4504a, #ea746e); }
				.sell { background: linear-gradient(#3c77fa, #6c98ff); }
				.char { font-size: 49px; font-weight: 500; line-height: 54px; }
			</style>
			<div class="index">
				<svg width="20" height="7" viewBox="0 0 20 7"><path d="M0 7h20L10 0z" fill="#777"/></svg>
				<fit-text class="value" text="3286.94" w="135"></fit-text>
				<div class="row"><fit-text text="专用设备" w="131"></fit-text><fit-text text="0.43%" w="97"></fit-text></div>
			</div>
			<div class="btn buy">买</div>
			<div class="btn sell">卖</div>
			<trade-action label="撤单"><span class="char">撤</span></trade-action>
			<trade-action label="加自选">
				<svg width="52" height="52" viewBox="0 0 52 52" fill="none" stroke="#333" stroke-width="3.800"><rect x="3" y="3" width="46" height="46" rx="8"/><path d="M26 14v24M14 26h24"/></svg>
			</trade-action>
			<trade-action label="更多">
				<svg width="44" height="10" viewBox="0 0 44 10" fill="#333"><circle cx="5" cy="5" r="4.400"/><circle cx="22" cy="5" r="4.400"/><circle cx="39" cy="5" r="4.400"/></svg>
			</trade-action>`;
	}
}

class StockPage extends Part {
	render() {
		return `
			<style>
				:host { display: flex; flex-direction: column; width: 1080px; height: 2340px; overflow: hidden; }
				:host > * { flex: none; }
				.more { display: flex; align-items: center; padding-left: 41px; gap: 11px; }
				.more gear-icon { margin-left: 39px; }
				.home { width: 399px; height: 10px; margin: 21px 0 0 340px; border-radius: 5px; background: #333; }
			</style>
			<status-bar></status-bar>
			<stock-header></stock-header>
			<top-banner text="一键开通科创成长层权限！把握打新、交易机会"></top-banner>
			<quote-panel></quote-panel>
			<notice-row text="中报预披露：于2025−08−26披露2025年中报"></notice-row>
			<tab-strip tabs="分时,五日,日K,周K,月K" on="1" pitch="161">
				<div class="more"><span>更多</span><svg width="14" height="12" viewBox="0 0 14 12"><path d="M0 0h14L7 12z" fill="#666"/></svg><gear-icon></gear-icon></div>
			</tab-strip>
			<average-row></average-row>
			<price-chart></price-chart>
			<volume-head></volume-head>
			<volume-chart></volume-chart>
			<date-axis></date-axis>
			<promo-pill></promo-pill>
			<tab-strip style="border-top:1px solid #d9d9d9;height:97px;padding:1px 0 0 31px" tabs="股吧,盘口,资讯,公告,研报,财务,资料" on="0" pitch="145.400"></tab-strip>
			<feed-cards></feed-cards>
			<trade-bar></trade-bar>
			<div class="home"></div>`;
	}
}

customElements.define("stock-page", StockPage);
customElements.define("status-bar", StatusBar);
customElements.define("stock-header", StockHeader);
customElements.define("top-banner", TopBanner);
customElements.define("quote-panel", QuotePanel);
customElements.define("quote-cell", QuoteCell);
customElements.define("notice-row", NoticeRow);
customElements.define("tab-strip", TabStrip);
customElements.define("gear-icon", GearIcon);
customElements.define("average-row", AverageRow);
customElements.define("price-chart", PriceChart);
customElements.define("volume-head", VolumeHead);
customElements.define("volume-chart", VolumeChart);
customElements.define("date-axis", DateAxis);
customElements.define("promo-pill", PromoPill);
customElements.define("feed-cards", FeedCards);
customElements.define("feed-card", FeedCard);
customElements.define("trade-bar", TradeBar);
customElements.define("trade-action", TradeAction);
// last, so that it measures inside finished parents
customElements.define("fit-text", FitText);
</script>
</body>
</html>
